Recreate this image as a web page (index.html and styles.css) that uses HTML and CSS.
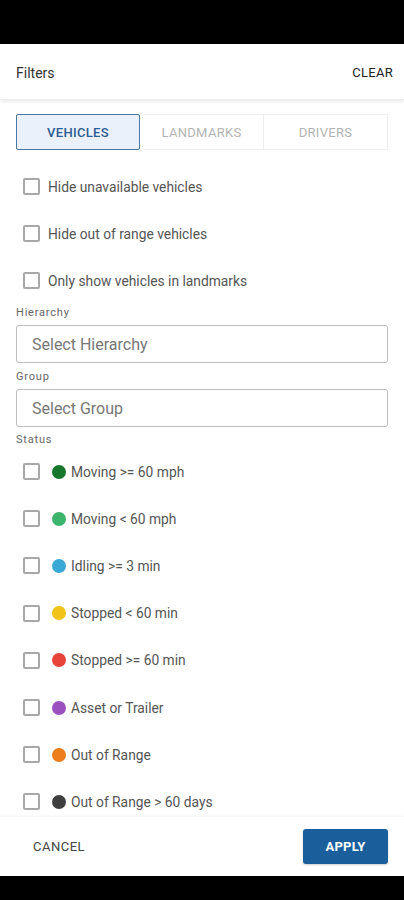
FILE: index.html
```html
<!DOCTYPE html>
<html>
<head>
<meta charset="utf-8">
<link rel="stylesheet" href="styles.css">
</head>
<body>
<div class="screen">
  <div class="statusbar"></div>
  <header class="header">
    <span class="title">Filters</span>
    <span class="clear">CLEAR</span>
  </header>
  <main class="content">
    <div class="tabs">
      <div class="tab active">VEHICLES</div>
      <div class="tab">LANDMARKS</div>
      <div class="tab">DRIVERS</div>
    </div>
    <ul class="options">
      <li class="row"><span class="box"></span><span class="label">Hide unavailable vehicles</span></li>
      <li class="row"><span class="box"></span><span class="label">Hide out of range vehicles</span></li>
      <li class="row"><span class="box"></span><span class="label">Only show vehicles in landmarks</span></li>
    </ul>
    <div class="field-label first">Hierarchy</div>
    <div class="select">Select Hierarchy</div>
    <div class="field-label">Group</div>
    <div class="select">Select Group</div>
    <div class="field-label status-label">Status</div>
    <ul class="options status">
      <li class="row"><span class="box"></span><span class="dot c1"></span><span class="label">Moving &gt;= 60 mph</span></li>
      <li class="row"><span class="box"></span><span class="dot c2"></span><span class="label">Moving &lt; 60 mph</span></li>
      <li class="row"><span class="box"></span><span class="dot c3"></span><span class="label">Idling &gt;= 3 min</span></li>
      <li class="row"><span class="box"></span><span class="dot c4"></span><span class="label">Stopped &lt; 60 min</span></li>
      <li class="row"><span class="box"></span><span class="dot c5"></span><span class="label">Stopped &gt;= 60 min</span></li>
      <li class="row"><span class="box"></span><span class="dot c6"></span><span class="label">Asset or Trailer</span></li>
      <li class="row"><span class="box"></span><span class="dot c7"></span><span class="label">Out of Range</span></li>
      <li class="row"><span class="box"></span><span class="dot c8"></span><span class="label">Out of Range &gt; 60 days</span></li>
    </ul>
  </main>
  <footer class="footer">
    <span class="cancel">CANCEL</span>
    <button class="apply">APPLY</button>
  </footer>
  <div class="navbar"></div>
</div>
</body>
</html>
```

FILE: styles.css
```css
* { box-sizing: border-box; }
html, body { margin: 0; padding: 0; }
body {
  font-family: Roboto, "Liberation Sans", sans-serif;
  background: #000;
}
.screen {
  width: 404px;
  height: 900px;
  display: flex;
  flex-direction: column;
  background: #fff;
  overflow: hidden;
}
.statusbar { height: 44px; background: #000; flex: none; }
.navbar { height: 24px; background: #000; flex: none; }
.header {
  flex: none;
  height: 56px;
  display: flex;
  align-items: center;
  justify-content: space-between;
  padding: 2px 11px 0 16px;
  background: #fff;
  position: relative;
  z-index: 2;
  box-shadow: 0 2px 3px rgba(0,0,0,0.08);
  border-bottom: 1px solid #eeeeee;
}
.title { font-size: 14px; color: #333; }
.clear { font-size: 13px; color: #222; letter-spacing: 0.3px; }
.content {
  flex: 1;
  overflow: hidden;
  padding: 14px 16px 0 16px;
}
.tabs {
  display: grid;
  grid-template-columns: 124px 124px 124px;
  height: 36px;
}
.tab {
  display: flex;
  align-items: center;
  justify-content: center;
  font-size: 13px;
  color: #b3b3b3;
  border: 1px solid #eeeeee;
  border-left: none;
  letter-spacing: 0.3px;
}
.tab.active {
  background: #eaf1fa;
  border: 1px solid #4a76a8;
  border-radius: 2px;
  color: #2c5d92;
  font-weight: 500;
}
.options {
  list-style: none;
  margin: 13px 0 0 0;
  padding: 0;
}
.row {
  height: 47px;
  display: flex;
  align-items: center;
  padding-left: 7px;
}
.status .row { height: 47.2px; }
.box {
  width: 17px;
  height: 17px;
  border: 2px solid #a8a8a8;
  border-radius: 2px;
  flex: none;
}
.label {
  font-size: 13.8px;
  color: #555;
  margin-left: 8px;
}
.dot {
  width: 14px;
  height: 14px;
  border-radius: 50%;
  margin-left: 12px;
  flex: none;
}
.dot + .label { margin-left: 5px; }
.c1 { background: #17782b; }
.c2 { background: #3db46b; }
.c3 { background: #3aa9d6; }
.c4 { background: #f1c318; }
.c5 { background: #e8443a; }
.c6 { background: #9b50c0; }
.c7 { background: #ee7e1c; }
.c8 { background: #3e3e3e; }
.field-label {
  font-size: 11px;
  letter-spacing: 0.8px;
  color: #666;
  height: 12px;
  line-height: 12px;
  margin-top: 8px;
}
.field-label.first { margin-top: 3px; }
.status-label { margin-top: 7px; }
.status { margin-top: 2px; }
.select {
  margin-top: 6px;
  height: 38px;
  border: 1px solid #bdbdbd;
  border-radius: 3px;
  display: flex;
  align-items: center;
  padding-left: 15px;
  font-size: 16px;
  color: #777;
}
.footer {
  flex: none;
  height: 59px;
  display: flex;
  align-items: center;
  justify-content: space-between;
  padding: 0 16px 0 33px;
  background: #fff;
  position: relative;
  z-index: 2;
  box-shadow: 0 -1px 3px rgba(0,0,0,0.05);
}
.cancel { font-size: 13px; color: #444; letter-spacing: 0.5px; }
.apply {
  width: 85px;
  height: 35px;
  background: #1b5e9c;
  color: #fff;
  border: none;
  border-radius: 3px;
  font-family: inherit;
  font-size: 13px;
  font-weight: 700;
  letter-spacing: 0.2px;
  box-shadow: 0 1px 2px rgba(0,0,0,0.2);
}
```
